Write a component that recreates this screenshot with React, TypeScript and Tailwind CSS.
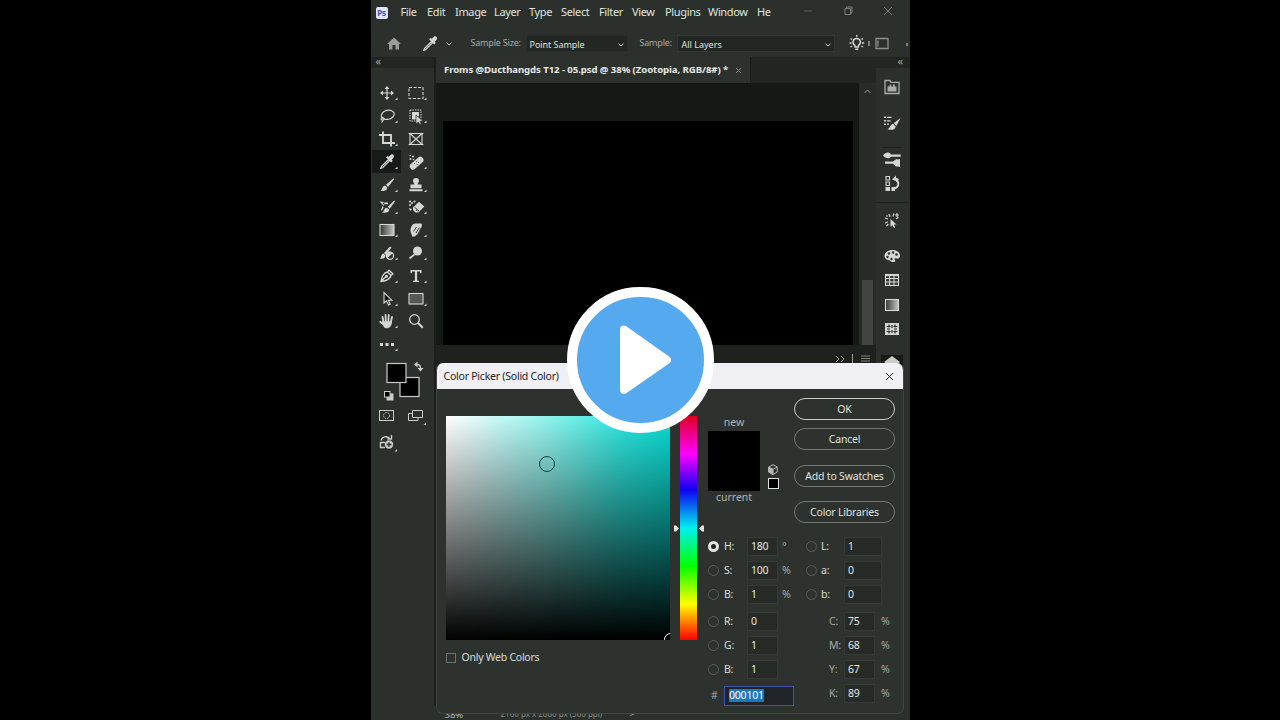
import React from "react";

const toolIcons: Record<string, React.ReactNode> = {
  move: (
    <g>
      <path d="M0-5V5M-5 0H5" stroke="currentColor" strokeWidth="1.2" />
      <path d="M0-7l2.4 3h-4.8zM0 7l2.4-3h-4.8zM-7 0l3-2.4v4.8zM7 0l-3-2.4v4.8z" fill="currentColor" />
    </g>
  ),
  marquee: <rect x="-7" y="-5.5" width="14" height="11" fill="none" stroke="currentColor" strokeWidth="1.1" strokeDasharray="3 1.6" />,
  lasso: (
    <g fill="none" stroke="currentColor" strokeWidth="1.2">
      <ellipse cx="1" cy="-1" rx="6.5" ry="4.5" transform="rotate(-12)" />
      <path d="M-4.5 1.5c-2 0-2 2.600 0 2.600s1.800-2 0-2.600M-4 4c0 1-.5 2-1.500 2.500" />
    </g>
  ),
  objectSelect: (
    <g>
      <rect x="-6" y="-6" width="11" height="11" fill="none" stroke="currentColor" strokeWidth="1" strokeDasharray="1.500 1" />
      <path d="M-4-4h7v4.500h-3v3h-4z" fill="currentColor" />
      <path d="M0-1l0 9 2.200-2 1.500 2.500 1.600-.8-1.300-2.500h3z" fill="currentColor" stroke="#2b302c" strokeWidth=".7" />
    </g>
  ),
  crop: <path d="M-4-7.500V4H8M-8-4H4V7.500" fill="none" stroke="currentColor" strokeWidth="1.900" />,
  frame: (
    <g fill="none" stroke="currentColor" strokeWidth="1.100">
      <rect x="-6" y="-5.500" width="12" height="11" />
      <path d="M-6-5.500L6 5.500M6-5.500L-6 5.500M-7.500-5.500h15M-7.500 5.500h15" />
    </g>
  ),
  eyedropper: (
    <g>
      <path d="M1.500-2.500l-7 7L-6.500 6.500l2.200-.8 7-7z" fill="none" stroke="currentColor" strokeWidth="1.200" strokeLinejoin="round" />
      <path d="M-1-4.700l1.500-1.200 1.300.7 2.300-2.200c1.600-1 3.900 1.200 2.600 2.800L4.900-2.500l.7 1.500-1.400 1.400z" fill="currentColor" />
    </g>
  ),
  heal: (
    <g>
      <rect x="-8" y="-3" width="16" height="6.400" rx="3" transform="translate(.5 1) rotate(-42)" fill="currentColor" />
      <path d="M-1.800 1.200l.8.800M.3-.8l.8.8M.5 2l.8.800M2.200.2l.8.8" stroke="#2b302c" strokeWidth="1" />
      <g fill="currentColor">
        <circle cx="-5.500" cy="-3" r="1" /><circle cx="-3" cy="-5.500" r="1" /><circle cx="-5.800" cy="-6.500" r=".8" /><circle cx="-2.500" cy="-2.500" r=".8" />
      </g>
    </g>
  ),
  brush: (
    <g fill="currentColor">
      <path d="M6.500-6.700L-1-.3 1 1.900 7-5.500z" />
      <path d="M-1.800.5L.3 2.800C.3 5.500-3 6.500-6.500 5.500-4.500 4.800-5 .5-1.800.5z" />
    </g>
  ),
  stamp: <path d="M-1.600-.5C-1.600-2-3-2.300-3-4a3 3 0 016 0c0 1.700-1.400 2-1.400 3.500H5.500v3.700h-11V-.5zM-6.500 4.300h13v2h-13z" fill="currentColor" />,
  history: (
    <g fill="currentColor">
      <path d="M7.200-6.500L.8-.2l1.900 2L8-5.500z" />
      <path d="M0 .7L2.200 2.800C1.800 5.800-1.500 6.300-5 5.500-2.500 4.500-3 .7 0 .7z" />
      <path d="M-7.500-5.500l4.500 4.500.5-4zM-4-4.500h5v1.700h-5zM-4.500-1L-6 3l1.200.4L-3.400 0z" />
    </g>
  ),
  eraser: (
    <g fill="currentColor">
      <path d="M-3 .5L3-5.200 8.300-.5 2.500 5.500H-.5L-3 3z" />
      <path d="M-1.300.3l4.500 4M0 2.800l1.300 1.200" stroke="#2b302c" strokeWidth="1" />
      <circle cx="-6" cy="-2" r="1.100" /><circle cx="-4" cy="-4" r="1.100" /><circle cx="-1.500" cy="-5.500" r="1.100" /><circle cx="-6" cy="-5.500" r="1.100" />
      <path d="M-7 1l3 1-2 2z" />
    </g>
  ),
  gradient: <rect x="-7" y="-5.500" width="14" height="11" fill="url(#grad)" stroke="currentColor" strokeWidth="1.100" />,
  smudge: (
    <g>
      <path d="M-4 6.500c.5-2-1.500-3-1.500-6C-5.500-3-3.500-6.500-.5-6.500H4.500c2 0 1.500 2 1 3.500L3 3C2 4.500 0 4.500-1 6.500z" fill="currentColor" />
      <path d="M-2.500 1.500l3-4.500M0 3l3.300-5.500M2 4L5-2" stroke="#2b302c" strokeWidth=".9" />
    </g>
  ),
  mixer: (
    <g>
      <path d="M3-6.500L-3 0l2 2L4.500-5.500zM-3.500.6l2 2C-2 6-4.500 6.300-7 5.500-5.500 4.500-6 1-3.500.6z" fill="currentColor" />
      <circle cx="3" cy="2.700" r="3.600" fill="#2b302c" stroke="currentColor" strokeWidth="1.200" />
      <path d="M.3 5.200A3.600 3.600 0 015.600.2z" fill="currentColor" />
    </g>
  ),
  dodge: (
    <g>
      <circle cx="1.500" cy="-2" r="4.500" fill="currentColor" />
      <path d="M-1.500 1.500L-6.500 5.500" stroke="currentColor" strokeWidth="1.700" />
    </g>
  ),
  pen: (
    <g fill="none" stroke="currentColor" strokeWidth="1.300" strokeLinejoin="round">
      <path d="M-6 5.500C-5 1-4-3 .5-4L4-.5C3 4-1.500 5-6 5.500zM.8-4.200L2-5.800 6-2 4.200-.7M-5.500 5L-1 .5" />
      <circle cx="-.5" cy=".2" r=".9" fill="currentColor" />
    </g>
  ),
  type: <path d="M-5.500-6h11v3.300H4.300L3.800-4.400H1.100V4.400l2 .5V6h-6.200V4.900l2-.5V-4.400h-2.700l-.5 1.700h-1.200z" fill="currentColor" />,
  select: <path d="M-3-6.500V4L-.5 1.800 1.500 6l1.700-.8L1.300 1.200H4.800z" fill="#151815" stroke="currentColor" strokeWidth="1.100" />,
  shape: <rect x="-7" y="-5.500" width="14" height="10.500" fill="#555955" stroke="currentColor" strokeWidth="1.100" />,
  hand: (
    <g fill="none" stroke="currentColor" strokeLinecap="round">
      <path d="M-3.500 1L-4.500-4M-1.200 0L-1.500-6M1.400 0L1.700-6M3.800 1.500L5-4M-3.500 3.500L-6.800.8" strokeWidth="1.800" />
      <path d="M-4.300.5H4.600C4.500 4 3.500 7 0 7S-3 5.300-4.300 3z" fill="currentColor" strokeWidth=".5" />
    </g>
  ),
  zoom: (
    <g fill="none" stroke="currentColor">
      <circle cx="-1.500" cy="-1.500" r="4.800" strokeWidth="1.300" />
      <path d="M2 2L6.800 6.800" strokeWidth="2" />
    </g>
  ),
  more: <path d="M-7-1h3v3h-3zM-1.500-1h3v3h-3zM4-1h3v3H4z" fill="currentColor" />,
};

const tools = [
  "move", "marquee", "lasso", "objectSelect", "crop", "frame", "eyedropper", "heal",
  "brush", "stamp", "history", "eraser", "gradient", "smudge", "mixer", "dodge",
  "pen", "type", "select", "shape", "hand", "zoom", "more",
];
const noCorner = ["frame", "zoom"];

const panelIcons: Record<string, React.ReactNode> = {
  library: (
    <g>
      <path d="M-7 6.500V-6.500h5l1 1.800h8V6.500z" fill="none" stroke="#a9ada8" strokeWidth="1.300" />
      <path d="M-4.500 4.500v-5h2v-2h1.800v2H1v-2h1.800v2h1.700v5z" fill="#a9ada8" />
    </g>
  ),
  brushes: (
    <g fill="currentColor">
      <path d="M-8-6.500h2v1.500h-2zM-8-3h2v1.500h-2zM-8 .5h2V2h-2zM-5-6.300h4.500v1.200H-5zM-5-2.800h3.500v1.200H-5zM-5 .6h2v1.200h-2z" />
      <path d="M8.500-5L1.700.3l2.600 2.800zM1 .8l2.700 2.900C3 6.800-.5 7.500-4.500 6.300-2 5.200-1.500 1.300 1 .8z" />
    </g>
  ),
  brushSettings: (
    <g fill="currentColor">
      <path d="M-9-3.500C-6.500-7-3-7.500-1-4.500H8.700v2.200H-1C-3 .2-6.500-.5-9-3.500zM-7 2.500H1L4 .3C6 .3 6 .7 8 0v8C6 7.300 6 7.500 4 7.500L1 4.700h-8z" />
    </g>
  ),
  historyPanel: (
    <g>
      <path d="M-6-6.500h3.500V-3H-6zM-6-1h3.500v3.500H-6z" fill="none" stroke="currentColor" strokeWidth="1.100" />
      <path d="M-6.500 4h4.500v4h-4.500zM-.5 4H3v4H-.5zM0-3.500L4-7.500v2.300L7-4 4-.5V-2z" fill="currentColor" />
      <path d="M4-4C8 0 6.500 4 2.500 5.500" fill="none" stroke="currentColor" strokeWidth="1.800" />
    </g>
  ),
  actions: (
    <g>
      <path d="M-1.500-1v8l2-1.800L2 8l1.200-.6L2 4.600h2.500z" fill="currentColor" />
      <path d="M-2-3l-1-3M1-3.500l.8-3M-4-1l-3-1M-4 2l-3 1M4-1l2.500-2M5-7v4M3-5h4M-3.500 4l-2 2M-4.500-3.500l-1-1" stroke="currentColor" strokeWidth="1.200" />
    </g>
  ),
  color: (
    <g>
      <path d="M-7.500 0c0-3.500 3.500-6 8-6S8-3.500 8-.5C8 2 6.500 3 4.500 2.500c-2-.5-2.500.5-1.500 1.500s0 2-2.500 2c-2 0-2.500-2-4-2S-7.500 2.500-7.500 0z" fill="currentColor" />
      <g fill="#2b302c"><circle cx="-4.500" cy="1" r="1.200" /><circle cx="-3" cy="-2.500" r="1.200" /><circle cx="1" cy="-3.500" r="1.200" /><circle cx="4.500" cy="-1.500" r="1.300" /><circle cx="-.5" cy="3" r="1.200" /></g>
    </g>
  ),
  swatches: (
    <g fill="none" stroke="currentColor" strokeWidth="1.100">
      <rect x="-6.500" y="-5.500" width="13" height="11" fill="#3a3e3a" />
      <path d="M-6.500-4.500h13M-6.500-1.500h13M-6.500 2h13M-2.300-5.500v11M2-5.500v11" />
    </g>
  ),
  gradients: <rect x="-6.500" y="-5.500" width="13" height="11" fill="url(#grad)" stroke="currentColor" strokeWidth="1.100" />,
  patterns: (
    <g>
      <rect x="-7" y="-6" width="14" height="12" fill="currentColor" />
      <path d="M-5.500-2.500h4M-5.500 2.500h4M5.500-2.500h-4M5.500 2.500h-4M-3-4.500v3M3-4.500v3M-3 1.500v3M3 1.500v3M0-4v3M0 1v3M-5 0h3M2 0h3" stroke="#2b302c" strokeWidth="1.200" fill="none" />
    </g>
  ),
};

const Icon = ({ children }: { children: React.ReactNode }) => (
  <svg width="26" height="22" viewBox="-13 -11 26 22" className="shrink-0 overflow-visible text-[#d4d7d3]">{children}</svg>
);

const Chevron = () => (
  <svg width="6" height="4" viewBox="0 0 6 4" className="shrink-0"><path d="M.5.6L3 3 5.500.6" fill="none" stroke="#d0d3cf" /></svg>
);

const MenuBar = () => (
  <div className="flex h-[26px] items-center bg-[#2c302c] pb-[2px] pl-[5px] text-[11px] tracking-[-0.35px] text-[#dfe2de]">
    <div className="mr-[13px] mt-[2px] flex h-[12px] w-[12px] items-center justify-center rounded-[2px] bg-[#dfe5fb] text-[8px] font-bold leading-none text-[#3c4fb0]">Ps</div>
    <span className="w-[26.500px]">File</span>
    <span className="w-[28px]">Edit</span>
    <span className="w-[39px]">Image</span>
    <span className="w-[35px]">Layer</span>
    <span className="w-[32px]">Type</span>
    <span className="w-[38px]">Select</span>
    <span className="w-[33px]">Filter</span>
    <span className="w-[33px]">View</span>
    <span className="w-[43px]">Plugins</span>
    <span className="w-[49px]">Window</span>
    <span className="w-[46px]">He</span>
    <svg width="90" height="12" viewBox="0 0 90 12" fill="none" stroke="#7b7f7a" className="-mt-[2px]">
      <path d="M1 6h8" strokeOpacity=".6" />
      <path d="M42 3.500h5.500v6H42zM43.500 3.500V2H49v6h-1.500" />
      <path d="M81 2l8 8M89 2l-8 8" />
    </svg>
  </div>
);

const OptionsBar = () => (
  <div className="flex h-[31px] items-center bg-[#2c302c] pl-[16px] pt-[4px] text-[9px] text-[#dfe2de]">
    <svg width="14" height="13" viewBox="0 0 14 13" className="mr-[16px]"><path d="M7 .5L0 7h2v5.500h3.500V8h3v4.500H12V7h2z" fill="#999d98" /></svg>
    <Icon>{toolIcons.eyedropper}</Icon>
    <span className="ml-[3px] mr-[18px] flex"><Chevron /></span>
    <span className="w-[56px] whitespace-nowrap pb-px pl-px tracking-[-0.2px] text-[#a6aaa5]">Sample Size:</span>
    <div className="flex h-[17px] w-[102px] items-center justify-between border border-[#2a2e2a] bg-[#232723] pl-[3px] pr-[3px] pt-[2px] tracking-[-0.05px]">Point Sample<Chevron /></div>
    <span className="ml-[11px] w-[38px] pb-px pl-px tracking-[-0.2px] text-[#a6aaa5]">Sample:</span>
    <div className="flex h-[17px] w-[158px] items-center justify-between border border-[#333733] bg-[#232723] pl-[4px] pr-[3px] pt-[2px]">All Layers<Chevron /></div>
    <svg width="60" height="18" viewBox="0 0 60 18" fill="none" stroke="#d4d7d3" className="ml-[14px] shrink-0">
      <path d="M6 12v-1.500c-4-3-1.500-7 1.700-7s5.700 4 1.700 7V12zM6.300 14.300h3M1.500 3.500l1.600 1M12.500 4.500l1.600-1M7.700 0v1.700M.5 8h2M13 8h2.200M1.500 12l1.500-1M14 12l-1.500-1" strokeWidth="1.400" />
      <path d="M20 6v5" />
      <path d="M27 3.500h12v10H27zM29 5.500v6" stroke="#8c908b" strokeWidth="1.300" />
      <path d="M58 8v3" />
    </svg>
  </div>
);

const Toolbar = () => (
  <div className="flex w-[63px] shrink-0 flex-col bg-[#2b302c]">
    <div className="h-[11px] bg-[#222622] pl-[5px] text-[11px] leading-[8px] text-[#a0a49f]">«</div>
    <div className="mt-[14px] grid grid-cols-[29px_29px] auto-rows-[22.800px] pl-[1.500px]">
      {tools.map((tool) => (
        <div key={tool} className={`flex items-center justify-center ${tool === "eyedropper" ? "bg-[#171a18]" : ""}`}>
          <Icon>
            {toolIcons[tool]}
            {!noCorner.includes(tool) && <path d="M10.500 4.500v2.500H8z" fill="currentColor" />}
          </Icon>
        </div>
      ))}
    </div>
    <svg width="63" height="100" viewBox="371 355 63 100" fill="none" stroke="#c9ccc8" className="-mt-px text-[#d4d7d3]">
      <rect x="400" y="377.500" width="19" height="19" fill="#000" strokeWidth="1.200" />
      <rect x="387" y="363.500" width="19" height="19" fill="#000" strokeWidth="1.200" />
      <path d="M415.500 364.500h2c2 0 3 1.500 3 4.500" strokeWidth="1.500" />
      <path d="M414 364.500l3.500-3v6zM420.500 371.500l-3-3.500h6z" fill="#c9ccc8" stroke="none" />
      <rect x="387" y="394" width="6" height="6" fill="#c9ccc8" />
      <rect x="384.500" y="391.500" width="5.500" height="5.500" fill="#000" />
      <rect x="379.500" y="410.500" width="14" height="10" /><circle cx="386.500" cy="415.500" r="3" strokeDasharray="1.500 1" />
      <path d="M412.500 410.500h10v7h-10z" /><path d="M412 413.500h-3.500v7h9.500V418" />
      <path d="M426 422.500v2.500h-2.500zM397 449v2.500h-2.500z" fill="#c9ccc8" stroke="none" />
      <path d="M381 440.500c1-4 6-5 8.500-2M391.500 435v4h-4M380 442.500h5M380 447.500h5M380.500 442v6" strokeWidth="1.400" />
      <circle cx="389" cy="444.500" r="4.200" fill="#c9ccc8" stroke="none" /><path d="M386.500 444.500h5M389 442v5" stroke="#2b302c" strokeWidth="1.300" />
    </svg>
  </div>
);

const Document = () => (
  <div className="flex min-w-0 flex-1 flex-col border-l-2 border-[#1b1e1b] bg-[#252925]">
    <div className="flex h-[26px] shrink-0 bg-[#222622]">
      <div className="flex w-[315px] items-center border-r border-[#1b1e1b] bg-[#2d312d] pl-[8.500px] text-[9.600px] font-bold tracking-[-0.08px] text-[#e6e8e5]">
        <span className="w-[290.500px] whitespace-nowrap">Froms @Ducthangds T12 - 05.psd @ 38% (Zootopia, RGB/8#) *</span>
        <svg width="7" height="7" viewBox="0 0 7 7" className="shrink-0"><path d="M1 1l5 5M6 1L1 6" stroke="#898d88" /></svg>
      </div>
    </div>
    <div className="flex h-[262px] shrink-0">
      <div className="flex flex-1 bg-[#151916] pl-[7px] pt-[38px]"><div className="w-[410px] bg-black" /></div>
      <div className="flex w-[17px] flex-col items-center bg-[#262b27] pt-[6px]">
        <svg width="7" height="5" viewBox="0 0 7 5"><path d="M.5 4L3.500 1l3 3" fill="none" stroke="#999d98" /></svg>
        <div className="mt-auto h-[65px] w-[11px] bg-[#414541]" />
      </div>
    </div>
    <div className="flex h-[366px] shrink-0 justify-end bg-[#1e221f] pr-[5px] pt-[9px]">
      <svg width="36" height="10" viewBox="0 0 36 10" fill="none" stroke="#9da19c">
        <path d="M1 2l3 3-3 3M6 2l3 3-3 3M17.500 0v10" /><path d="M26 2h9M26 4.500h9M26 7h9M26 9.500h9" stroke="#7c807b" />
      </svg>
    </div>
  </div>
);

const PanelDock = () => (
  <div className="flex w-[34px] shrink-0 flex-col bg-[#2b302c] pb-10">
    <div className="h-[11px] bg-[#222622] pl-[22px] text-[11px] leading-[8px] text-[#a0a49f]">«</div>
    <div className="flex flex-col items-center pr-[2px] pt-[8px]">
      <Icon>{panelIcons.library}</Icon>
      <div className="h-[14px]" />
      <Icon>{panelIcons.brushes}</Icon>
      <div className="h-[14px] w-5 border-b border-[#1f231f]" />
      <Icon>{panelIcons.brushSettings}</Icon>
      <div className="h-[2px]" />
      <Icon>{panelIcons.historyPanel}</Icon>
      <div className="mb-[6px] h-[9px] w-full border-b border-[#1f231f]" />
      <Icon>{panelIcons.actions}</Icon>
      <div className="h-[14px]" />
      <Icon>{panelIcons.color}</Icon>
      <div className="h-[2px]" />
      <Icon>{panelIcons.swatches}</Icon>
      <div className="h-[2.500px]" />
      <Icon>{panelIcons.gradients}</Icon>
      <div className="h-[2.500px]" />
      <Icon>{panelIcons.patterns}</Icon>
      <div className="mt-[15px] flex h-[30px] w-[22px] justify-center bg-[#171a18]">
        <svg width="16" height="14" viewBox="0 0 16 14"><path d="M8 1l8 6-8 6-8-6z" fill="#c9ccc8" /></svg>
      </div>
    </div>
  </div>
);

type FieldProps = { label: string; value: string; unit?: string; radio?: boolean; checked?: boolean; right?: boolean };

const Field = ({ label, value, unit, radio = true, checked, right }: FieldProps) => (
  <div className="flex h-[24px] items-center text-[10.500px] tracking-[-0.2px]">
    <span className={`flex shrink-0 ${right ? "w-[15px]" : "w-[16px]"}`}>
      {radio && <span className={`h-[11px] w-[11px] rounded-full ${checked ? "border-[3.500px] border-[#e4e6e3] bg-[#222]" : "border border-[#585c58]"}`} />}
    </span>
    <span className={`shrink-0 pt-px ${radio ? "text-[#d9dcd8]" : "pl-[8px] text-[#a5a9a4]"} ${right ? "w-[23px]" : "w-[23px]"}`}>{label}</span>
    <span className={`flex h-[19px] shrink-0 items-center border border-[#363a36] bg-[#272b27] pl-[3px] pt-px text-[#e3e5e2] ${right && radio ? "w-[38px]" : "w-[31px]"}`}>{value}</span>
    <span className={right ? "pl-[6px] pt-px text-[#a5a9a4]" : "pl-[4px] pt-px text-[#a5a9a4]"}>{unit}</span>
  </div>
);

const DialogButton = ({ children, primary }: { children: string; primary?: boolean }) => (
  <button className={`flex h-[22px] w-[101px] items-center justify-center rounded-full pt-px text-[10.500px] tracking-[-0.2px] text-[#dfe2de] ${primary ? "border-[1.500px] border-[#c9ccc8]" : "border border-[#747874]"}`}>{children}</button>
);

const ColorPicker = () => (
  <div className="absolute left-[436px] top-[363px] h-[351px] w-[467.500px] overflow-hidden rounded-[7px] border border-t-0 border-[#424641] bg-[#2e322e]">
    <div className="flex h-[26px] items-center justify-between bg-[#f0f0f4] pl-[6.500px] pr-[9px] pt-[1px] text-[10.500px] tracking-[-0.23px] text-[#202124]">
      Color Picker (Solid Color)
      <svg width="9" height="9" viewBox="0 0 9 9"><path d="M1 1l7 7M8 1L1 8" stroke="#222" /></svg>
    </div>
    <div className="flex pl-[8.500px]">
      <div className="w-[224px] shrink-0 pt-[27px]">
        <div className="relative h-[224px] overflow-hidden bg-[linear-gradient(to_top,#000,transparent),linear-gradient(to_right,#fff,#8ff4ee_46%,#30e6de_78%,#0adcd4)]">
          <span className="absolute left-[93.500px] top-[40px] h-[16px] w-[16px] rounded-full border-[1.300px] border-[#123f4a]" />
          <span className="absolute left-[218px] top-[217px] h-[13px] w-[13px] rounded-full border-[1.500px] border-white" />
        </div>
        <div className="mt-[10px] flex items-center text-[10.500px] tracking-[-0.25px] text-[#d9dcd8]">
          <span className="mr-[6px] h-[10px] w-[10px] border border-[#70746f]" />Only Web Colors
        </div>
      </div>
      <div className="ml-[4px] mr-[2px] flex w-[32px] shrink-0 items-start pt-[27px]">
        <svg width="5" height="7" viewBox="0 0 5 7" className="mt-[109px]"><path d="M0 .5h2l3 3-3 3H0z" fill="#e0e3df" /></svg>
        <div className="ml-[1px] h-[224px] w-[17.500px] shrink-0 bg-[linear-gradient(#e00020,#f0f_17%,#1000f0_33%,#00f0f0_50%,#0f0_67%,#ff0_84%,#f00_100%)]" />
        <svg width="5" height="7" viewBox="0 0 5 7" className="ml-[1.500px] mt-[109px] shrink-0"><path d="M5 .5H3l-3 3 3 3h2z" fill="#e0e3df" /></svg>
      </div>
      <div className="min-w-0 flex-1 pl-[0.500px]">
        <div className="flex h-[145px] pt-[9px]">
          <div className="w-[52px] pt-[17px] text-center text-[10.500px] leading-[14px] text-[#afb3ae]">
            new
            <div className="mt-[2px] h-[60px] bg-black" />
            <div className="-mt-px">current</div>
          </div>
          <div className="flex w-[26px] flex-col items-center pt-[66px]">
            <svg width="10" height="11" viewBox="0 0 10 11" stroke="#b3b7b2"><path d="M.7 3L5 .7 9.300 3v5L5 10.500.7 8z" fill="none" /><path d="M.7 3L5 5.200V10.500L.7 8z" fill="#b3b7b2" /><path d="M5 5.200L9.300 3" /></svg>
            <div className="mt-[3px] h-[11px] w-[11px] border-[1.500px] border-[#dfe2de] bg-black" />
          </div>
          <div className="ml-[8px] flex flex-col">
            <DialogButton primary>OK</DialogButton>
            <div className="h-[8px]" />
            <DialogButton>Cancel</DialogButton>
            <div className="h-[15px]" />
            <DialogButton>Add to Swatches</DialogButton>
            <div className="h-[14px]" />
            <DialogButton>Color Libraries</DialogButton>
          </div>
        </div>
        <div className="flex">
          <div className="w-[98px] shrink-0">
            <Field label="H:" value="180" unit="°" checked />
            <Field label="S:" value="100" unit="%" />
            <Field label="B:" value="1" unit="%" />
            <div className="h-[3px]" />
            <Field label="R:" value="0" />
            <Field label="G:" value="1" />
            <Field label="B:" value="1" />
            <div className="mt-[3.500px] flex h-[22px] items-center text-[10.500px] tracking-[-0.2px]">
              <span className="w-[16px] pl-[3px] text-[#a5a9a4]">#</span>
              <span className="flex h-[20px] w-[70px] items-center border border-[#3c55a8] bg-[#202429] pl-[4px]">
                <span className="bg-[#1c78bd] leading-[13px] text-white">000101</span>
              </span>
            </div>
          </div>
          <div>
            <Field label="L:" value="1" right />
            <Field label="a:" value="0" right />
            <Field label="b:" value="0" right />
            <div className="h-[3px]" />
            <Field label="C:" value="75" unit="%" radio={false} right />
            <Field label="M:" value="68" unit="%" radio={false} right />
            <Field label="Y:" value="67" unit="%" radio={false} right />
            <Field label="K:" value="89" unit="%" radio={false} right />
          </div>
        </div>
      </div>
    </div>
  </div>
);

const PlayButton = () => (
  <button aria-label="Play" className="absolute left-[567px] top-[287px] flex h-[146px] w-[147px] items-center justify-center rounded-full border-[10px] border-white bg-[#55a9ef]">
    <svg width="52" height="70" viewBox="0 0 52 70" className="ml-[11px] mt-[-1px]">
      <path d="M4 4.500L47 35 4 65z" fill="#fff" stroke="#fff" strokeWidth="8" strokeLinejoin="round" />
    </svg>
  </button>
);

export default function App() {
  return (
    <div className="relative flex h-[720px] w-[1280px] justify-center overflow-hidden bg-black font-['Noto_Sans',sans-serif]">
      <svg width="0" height="0" className="absolute">
        <defs>
          <linearGradient id="grad"><stop stopColor="#333733" /><stop offset="1" stopColor="#c5c8c4" /></linearGradient>
        </defs>
      </svg>
      <div className="flex h-[720px] w-[539px] flex-col overflow-hidden bg-[#2b302c]">
        <MenuBar />
        <OptionsBar />
        <div className="flex h-[649px] shrink-0">
          <Toolbar />
          <Document />
          <PanelDock />
        </div>
        <div className="flex h-[14px] shrink-0 items-center pl-[74px] text-[9.500px] leading-[14px] text-[#b5b8b4]">
          <span className="w-[56px] pt-[3px]">38%</span>
          <span className="w-[129px] pt-[2px] text-[8px] text-[#858984]">2160 px x 2880 px (300 ppi)</span>
          <span className="pt-px">&gt;</span>
        </div>
      </div>
      <ColorPicker />
      <PlayButton />
    </div>
  );
}
